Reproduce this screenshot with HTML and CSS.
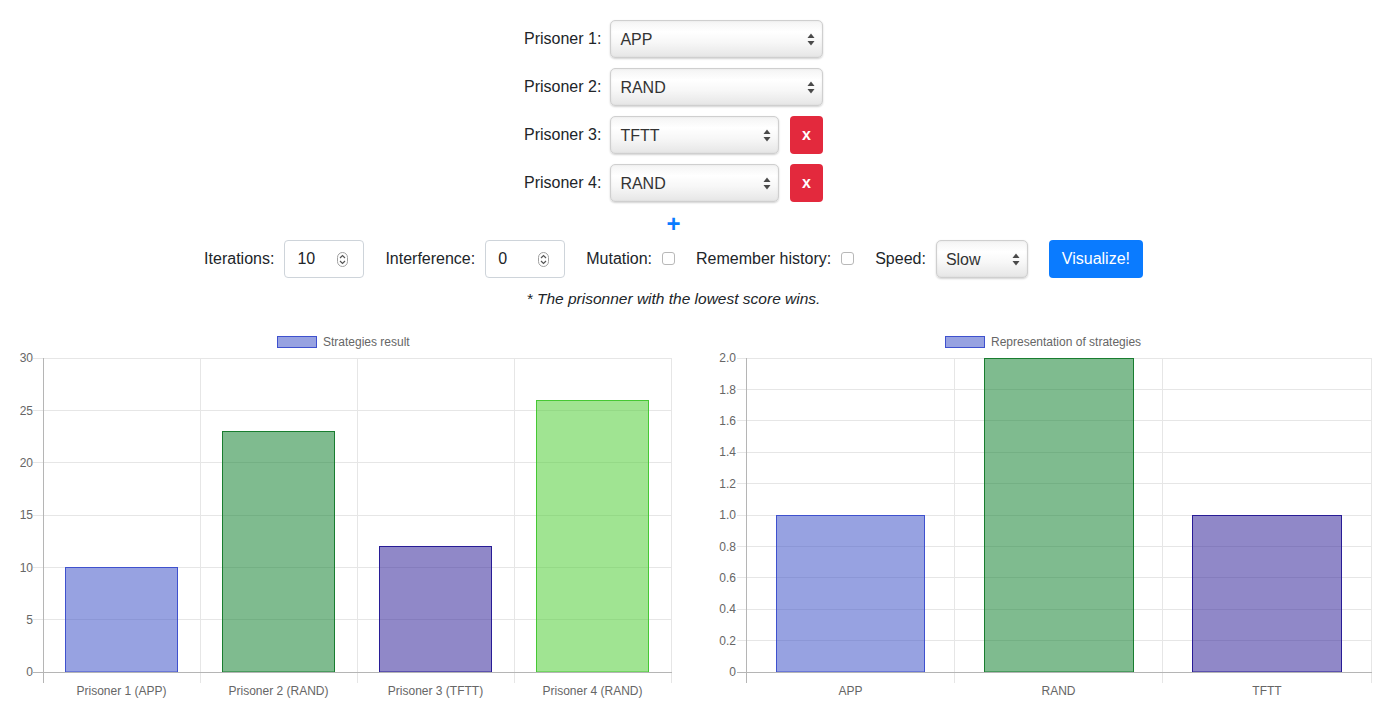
FILE: index.html
```html
<!DOCTYPE html>
<html>
<head>
<meta charset="utf-8">
<link rel="stylesheet" href="styles.css">
</head>
<body>
<div class="top">
  <div class="prisoners">
    <div class="row">
      <label class="lbl">Prisoner 1:</label>
      <div class="select"><span>APP</span><svg class="arr" width="8" height="13" viewBox="0 0 8 13"><polygon points="0.5,5 4,0.5 7.5,5" /><polygon points="0.5,8 4,12.5 7.5,8" /></svg></div>
    </div>
    <div class="row">
      <label class="lbl">Prisoner 2:</label>
      <div class="select"><span>RAND</span><svg class="arr" width="8" height="13" viewBox="0 0 8 13"><polygon points="0.5,5 4,0.5 7.5,5" /><polygon points="0.5,8 4,12.5 7.5,8" /></svg></div>
    </div>
    <div class="row">
      <label class="lbl">Prisoner 3:</label>
      <div class="select"><span>TFTT</span><svg class="arr" width="8" height="13" viewBox="0 0 8 13"><polygon points="0.5,5 4,0.5 7.5,5" /><polygon points="0.5,8 4,12.5 7.5,8" /></svg></div>
      <button class="del">x</button>
    </div>
    <div class="row">
      <label class="lbl">Prisoner 4:</label>
      <div class="select"><span>RAND</span><svg class="arr" width="8" height="13" viewBox="0 0 8 13"><polygon points="0.5,5 4,0.5 7.5,5" /><polygon points="0.5,8 4,12.5 7.5,8" /></svg></div>
      <button class="del">x</button>
    </div>
  </div>
  <div class="plus">+</div>
  <div class="controls">
    <label class="lbl">Iterations:</label>
    <div class="num"><span>10</span><svg class="spin" width="11" height="15" viewBox="0 0 11 15"><rect x="0.5" y="0.5" width="10" height="14" rx="5" /><path d="M3 6 L5.5 3.5 L8 6" /><path d="M3 9 L5.5 11.5 L8 9" /></svg></div>
    <label class="lbl">Interference:</label>
    <div class="num"><span>0</span><svg class="spin" width="11" height="15" viewBox="0 0 11 15"><rect x="0.5" y="0.5" width="10" height="14" rx="5" /><path d="M3 6 L5.5 3.5 L8 6" /><path d="M3 9 L5.5 11.5 L8 9" /></svg></div>
    <label class="lbl">Mutation:</label>
    <span class="check"></span>
    <label class="lbl">Remember history:</label>
    <span class="check"></span>
    <label class="lbl">Speed:</label>
    <div class="select speed"><span>Slow</span><svg class="arr" width="8" height="13" viewBox="0 0 8 13"><polygon points="0.5,5 4,0.5 7.5,5" /><polygon points="0.5,8 4,12.5 7.5,8" /></svg></div>
    <button class="go">Visualize!</button>
  </div>
  <p class="note">* The prisonner with the lowest score wins.</p>
</div>

<div class="charts">
  <svg class="chart" width="686" height="398" viewBox="0 320 686 398">
    <g class="legend">
      <rect x="277.5" y="336.5" width="39" height="11" fill="rgb(65,85,200)" fill-opacity="0.55" stroke="rgb(63,81,206)" />
      <text x="323" y="345.5">Strategies result</text>
    </g>
    <g class="grid">
      <line x1="33" y1="358.5" x2="672" y2="358.5" />
      <line x1="33" y1="410.5" x2="672" y2="410.5" />
      <line x1="33" y1="462.5" x2="672" y2="462.5" />
      <line x1="33" y1="515.5" x2="672" y2="515.5" />
      <line x1="33" y1="567.5" x2="672" y2="567.5" />
      <line x1="33" y1="619.5" x2="672" y2="619.5" />
      <line x1="200.5" y1="358" x2="200.5" y2="683" />
      <line x1="357.5" y1="358" x2="357.5" y2="683" />
      <line x1="514.5" y1="358" x2="514.5" y2="683" />
      <line x1="671.5" y1="358" x2="671.5" y2="683" />
    </g>
    <g class="bars">
      <rect x="65.5" y="567.5" width="112" height="104.5" fill="rgb(65,85,200)" fill-opacity="0.55" stroke="rgb(63,81,206)" />
      <rect x="222.5" y="431.5" width="112" height="240.5" fill="rgb(22,131,51)" fill-opacity="0.55" stroke="rgb(25,125,48)" />
      <rect x="379.5" y="546.5" width="112" height="125.5" fill="rgb(53,39,155)" fill-opacity="0.55" stroke="rgb(40,28,150)" />
      <rect x="536.5" y="400.5" width="112" height="271.5" fill="rgb(82,206,57)" fill-opacity="0.55" stroke="rgb(70,200,52)" />
    </g>
    <g class="axis">
      <line x1="43.5" y1="358" x2="43.5" y2="683" />
      <line x1="33" y1="672.5" x2="672" y2="672.5" />
    </g>
    <g class="ylab">
      <text x="33" y="362">30</text>
      <text x="33" y="414.5">25</text>
      <text x="33" y="466.5">20</text>
      <text x="33" y="519">15</text>
      <text x="33" y="571.5">10</text>
      <text x="33" y="623.5">5</text>
      <text x="33" y="676">0</text>
    </g>
    <g class="xlab">
      <text x="121.5" y="694.5">Prisoner 1 (APP)</text>
      <text x="278.5" y="694.5">Prisoner 2 (RAND)</text>
      <text x="435.5" y="694.5">Prisoner 3 (TFTT)</text>
      <text x="592.5" y="694.5">Prisoner 4 (RAND)</text>
    </g>
  </svg>
  <svg class="chart" width="686" height="398" viewBox="700 320 686 398">
    <g class="legend">
      <rect x="945.5" y="336.5" width="39" height="11" fill="rgb(65,85,200)" fill-opacity="0.55" stroke="rgb(63,81,206)" />
      <text x="991" y="345.5">Representation of strategies</text>
    </g>
    <g class="grid">
      <line x1="737" y1="358.5" x2="1372" y2="358.5" />
      <line x1="737" y1="389.5" x2="1372" y2="389.5" />
      <line x1="737" y1="420.5" x2="1372" y2="420.5" />
      <line x1="737" y1="452.5" x2="1372" y2="452.5" />
      <line x1="737" y1="483.5" x2="1372" y2="483.5" />
      <line x1="737" y1="515.5" x2="1372" y2="515.5" />
      <line x1="737" y1="546.5" x2="1372" y2="546.5" />
      <line x1="737" y1="577.5" x2="1372" y2="577.5" />
      <line x1="737" y1="609.5" x2="1372" y2="609.5" />
      <line x1="737" y1="640.5" x2="1372" y2="640.5" />
      <line x1="954.5" y1="358" x2="954.5" y2="683" />
      <line x1="1162.5" y1="358" x2="1162.5" y2="683" />
      <line x1="1371.5" y1="358" x2="1371.5" y2="683" />
    </g>
    <g class="bars">
      <rect x="776.5" y="515.5" width="148" height="156.5" fill="rgb(65,85,200)" fill-opacity="0.55" stroke="rgb(63,81,206)" />
      <rect x="984.5" y="358.5" width="149" height="313.5" fill="rgb(22,131,51)" fill-opacity="0.55" stroke="rgb(25,125,48)" />
      <rect x="1192.5" y="515.5" width="149" height="156.5" fill="rgb(53,39,155)" fill-opacity="0.55" stroke="rgb(40,28,150)" />
    </g>
    <g class="axis">
      <line x1="746.5" y1="358" x2="746.5" y2="683" />
      <line x1="737" y1="672.5" x2="1372" y2="672.5" />
    </g>
    <g class="ylab">
      <text x="736" y="362">2.0</text>
      <text x="736" y="393.5">1.8</text>
      <text x="736" y="425">1.6</text>
      <text x="736" y="456">1.4</text>
      <text x="736" y="487.5">1.2</text>
      <text x="736" y="519">1.0</text>
      <text x="736" y="550.5">0.8</text>
      <text x="736" y="582">0.6</text>
      <text x="736" y="613">0.4</text>
      <text x="736" y="644.5">0.2</text>
      <text x="736" y="676">0</text>
    </g>
    <g class="xlab">
      <text x="850.5" y="694.5">APP</text>
      <text x="1058.5" y="694.5">RAND</text>
      <text x="1267" y="694.5">TFTT</text>
    </g>
  </svg>
</div>
</body>
</html>
```

FILE: styles.css
```css
html, body {
  margin: 0;
  padding: 0;
  background: #ffffff;
}

body {
  font-family: "Liberation Sans", Arial, Helvetica, sans-serif;
  color: #212529;
  font-size: 16px;
  width: 1399px;
  height: 718px;
  overflow: hidden;
}

.top {
  width: 1347px;
  padding-top: 20px;
  display: flex;
  flex-direction: column;
  align-items: center;
}

.prisoners {
  width: 299px;
  display: flex;
  flex-direction: column;
  gap: 10px;
}

.row {
  display: flex;
  align-items: center;
  height: 38px;
}

.lbl {
  font-size: 16px;
  line-height: 20px;
  color: #212529;
  white-space: nowrap;
}

.row .lbl {
  margin-right: 9px;
}

.select {
  flex: 1;
  height: 38px;
  box-sizing: border-box;
  display: flex;
  align-items: center;
  justify-content: space-between;
  padding: 0 7px 0 9px;
  border: 1px solid #cfcfcf;
  border-radius: 5px;
  background: linear-gradient(to bottom, #f4f4f4 0%, #ffffff 30%, #f7f7f7 60%, #e6e6e6 100%);
  box-shadow: 0 1px 2px rgba(0, 0, 0, 0.18), inset 0 0 2px rgba(0, 0, 0, 0.08);
  font-size: 16px;
  color: #333333;
}

.select span {
  line-height: 20px;
  padding-top: 2px;
}

.arr polygon {
  fill: #4a4a4a;
}

.del {
  width: 33px;
  height: 38px;
  margin-left: 11px;
  border: none;
  border-radius: 4px;
  background: #e3293d;
  color: #ffffff;
  font-family: "Liberation Sans", Arial, sans-serif;
  font-size: 16px;
  font-weight: bold;
  padding: 0;
  line-height: 36px;
}

.plus {
  margin-top: 8px;
  height: 28px;
  line-height: 28px;
  font-size: 24px;
  font-weight: bold;
  color: #0a7cff;
}

.controls {
  margin-top: 2px;
  height: 38px;
  display: flex;
  align-items: center;
}

.controls .lbl {
  margin-right: 10px;
}

.num {
  width: 80px;
  height: 38px;
  box-sizing: border-box;
  border: 1px solid #ced4da;
  border-radius: 4px;
  display: flex;
  align-items: center;
  justify-content: space-between;
  padding: 0 15px 0 12px;
  margin-right: 21px;
  color: #212529;
}

.spin rect {
  fill: none;
  stroke: #a0a0a0;
  stroke-width: 1;
}

.spin path {
  fill: none;
  stroke: #555555;
  stroke-width: 1.2;
}

.check {
  width: 13px;
  height: 13px;
  box-sizing: border-box;
  border: 1px solid #b8b8b8;
  border-radius: 3px;
  background: #ffffff;
  margin-top: -2px;
  margin-right: 21px;
}

.select.speed {
  flex: none;
  width: 92px;
  margin-right: 21px;
}

.go {
  width: 94px;
  height: 38px;
  border: none;
  border-radius: 4px;
  background: #0a7bff;
  color: #ffffff;
  font-family: "Liberation Sans", Arial, sans-serif;
  font-size: 16px;
  padding: 0;
}

.note {
  margin: 11px 0 0 0;
  font-size: 15.5px;
  line-height: 20px;
  font-style: italic;
  color: #212529;
}

.charts {
  margin-top: 11px;
  display: flex;
  gap: 14px;
}

.chart {
  display: block;
  font-family: "Liberation Sans", Arial, Helvetica, sans-serif;
  font-size: 12px;
}

.chart text {
  fill: #666666;
}

.grid line {
  stroke: #e6e6e6;
  stroke-width: 1;
}

.axis line {
  stroke: #b5b5b5;
  stroke-width: 1;
}

.ylab text {
  text-anchor: end;
}

.xlab text {
  text-anchor: middle;
}
```
